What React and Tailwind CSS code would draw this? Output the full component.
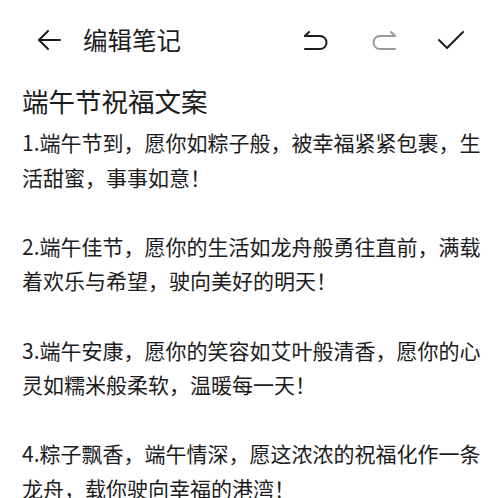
import React from 'react';

const paragraphs = [
  ['1.端午节到，愿你如粽子般，被幸福紧紧包裹，生', '活甜蜜，事事如意！'],
  ['2.端午佳节，愿你的生活如龙舟般勇往直前，满载', '着欢乐与希望，驶向美好的明天！'],
  ['3.端午安康，愿你的笑容如艾叶般清香，愿你的心', '灵如糯米般柔软，温暖每一天！'],
  ['4.粽子飘香，端午情深，愿这浓浓的祝福化作一条', '龙舟，载你驶向幸福的港湾！'],
];

function BackIcon() {
  return (
    <svg width="25" height="22" viewBox="0 0 25 22" fill="none" stroke="#1c1c1c" strokeWidth="2" strokeLinecap="round" strokeLinejoin="round">
      <path d="M2 11 H23" />
      <path d="M11 2 L2 11 L11 20" />
    </svg>
  );
}

function UndoIcon({ color, mirror }) {
  return (
    <svg width="26" height="22" viewBox="0 0 26 22" fill="none" stroke={color} strokeWidth="2" strokeLinecap="round" strokeLinejoin="round" className={mirror ? '-scale-x-100' : ''}>
      <path d="M2 7 L6 3" />
      <path d="M2 7 H17 A6.5 6.5 0 0 1 17 20 H2" />
    </svg>
  );
}

function CheckIcon() {
  return (
    <svg width="28" height="20" viewBox="0 0 28 20" fill="none" stroke="#1c1c1c" strokeWidth="2" strokeLinecap="round" strokeLinejoin="round">
      <path d="M2 10 L10 18 L26 2" />
    </svg>
  );
}

export default function App() {
  return (
    <div
      className="w-[500px] h-[498px] overflow-hidden bg-white text-[#1c1c1c]"
      style={{ fontFamily: '"Noto Sans CJK SC", "Noto Sans", sans-serif' }}
    >
      <header className="h-[80px] flex items-center pl-[37px] pr-[35px]">
        <BackIcon />
        <h1 className="ml-[21px] text-[24.5px] leading-none">编辑笔记</h1>
        <div className="ml-auto flex items-center">
          <UndoIcon color="#1c1c1c" />
          <div className="ml-[42px]">
            <UndoIcon color="#9a9a9a" mirror />
          </div>
          <div className="ml-[40px]">
            <CheckIcon />
          </div>
        </div>
      </header>
      <main className="px-[22px] pt-1">
        <h2 className="text-[26.5px] leading-[34px]">端午节祝福文案</h2>
        <div className="mt-[7px] text-[21px] leading-[34.6px]">
          {paragraphs.map((lines, i) => (
            <div key={i} className={i > 0 ? 'mt-[34.6px]' : ''}>
              {lines.map((l, j) => (
                <div key={j} className="whitespace-nowrap">{l}</div>
              ))}
            </div>
          ))}
        </div>
      </main>
    </div>
  );
}
